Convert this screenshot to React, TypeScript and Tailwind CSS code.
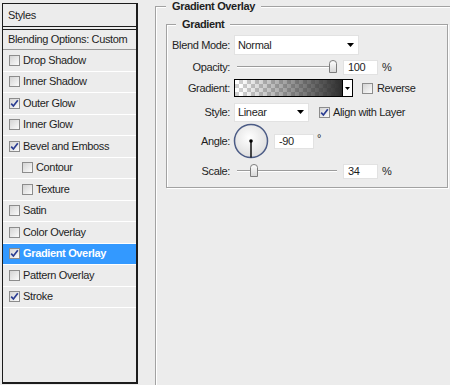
import React from "react";

type Item = { name: string; checked: boolean; indent?: boolean; active?: boolean };

const items: Item[] = [
    { name: "Drop Shadow", checked: false },
    { name: "Inner Shadow", checked: false },
    { name: "Outer Glow", checked: true },
    { name: "Inner Glow", checked: false },
    { name: "Bevel and Emboss", checked: true },
    { name: "Contour", checked: false, indent: true },
    { name: "Texture", checked: false, indent: true },
    { name: "Satin", checked: false },
    { name: "Color Overlay", checked: false },
    { name: "Gradient Overlay", checked: true, active: true },
    { name: "Pattern Overlay", checked: false },
    { name: "Stroke", checked: true },
];

const CheckBox = ({ checked }: { checked: boolean }) => (
    <span className="w-[11px] h-[11px] shrink-0 border border-[#8c8c8c] bg-linear-to-br from-[#d4d4d4] to-[#fbfbfb] flex items-center justify-center">
        {checked && (
            <svg width="9" height="9" viewBox="0 0 9 9">
                <path d="M1.2 4.6 L3.4 7 L7.8 1.3" fill="none" stroke="#2b3d92" strokeWidth="1.7" />
            </svg>
        )}
    </span>
);

const Arrow = () => (
    <svg width="7" height="4" viewBox="0 0 7 4">
        <path d="M0 0 H7 L3.5 4 Z" fill="#000" />
    </svg>
);

const Thumb = () => (
    <svg width="8" height="13" viewBox="0 0 8 13">
        <defs>
            <linearGradient id="thumbFill" x1="0" x2="0" y1="0" y2="1">
                <stop offset="0" stopColor="#ffffff" />
                <stop offset="1" stopColor="#d6d6d6" />
            </linearGradient>
        </defs>
        <path d="M0.5 3.5 Q0.5 0.5 4 0.5 Q7.5 0.5 7.5 3.5 V12.5 H0.5 Z" fill="url(#thumbFill)" stroke="#7c7c7c" />
    </svg>
);

// slider track with thumb at a fixed spot
const Slider = ({ thumbClass }: { thumbClass: string }) => (
    <div className="relative w-[100px] h-[14px] ml-[3px]">
        <div className="absolute left-0 right-0 top-[6px] h-[2px] border-t border-[#9c9c9c] border-b border-b-white" />
        <div className={`absolute top-0 ${thumbClass}`}>
            <Thumb />
        </div>
    </div>
);

const Row = ({ label, className, children }: { label: string; className: string; children: React.ReactNode }) => (
    <div className={`flex items-center ${className}`}>
        <span className="w-[63px] text-right shrink-0">{label}</span>
        <div className="ml-[4px] flex items-center">{children}</div>
    </div>
);

export default function App() {
    return (
        <div className="w-[450px] h-[385px] overflow-hidden bg-[#ececec] flex font-['Liberation_Sans',Arial,sans-serif] text-[11px] leading-[13px] tracking-[-0.35px] text-[#1e1e1e] whitespace-nowrap">
            {/* layer styles list */}
            <div className="ml-[2px] mt-[3px] w-[136px] h-[381px] shrink-0 flex flex-col border-t border-l border-r-2 border-b-2 border-[#1c1c1c]">
                <div className="h-[22px] px-[5px] flex items-center">Styles</div>
                <div className="h-[4px] border-y border-[#1c1c1c]" />
                <div className="h-[20px] px-[5px] flex items-center border-b border-[#9a9a9a]">Blending Options: Custom</div>
                {items.map((it) => (
                    <div
                        key={it.name}
                        className={`h-[21.5px] flex items-center gap-[3px] border-b border-white ${it.indent ? "pl-[19px]" : "pl-[6px]"} ${it.active ? "bg-[#3399ff] text-white font-bold" : ""}`}
                    >
                        <CheckBox checked={it.checked} />
                        <span>{it.name}</span>
                    </div>
                ))}
            </div>

            {/* settings */}
            <fieldset className="ml-[17px] w-[300px] h-[392px] shrink-0 min-w-0 border border-[#a2a2a2] shadow-[inset_1px_1px_0_#fff] pl-[10px] pt-[5px]">
                <legend className="px-[6px] font-bold bg-[#ececec]">Gradient Overlay</legend>
                <fieldset className="w-[282px] min-w-0 border border-[#a2a2a2] shadow-[inset_1px_1px_0_#fff,1px_1px_0_#fff] pt-[4px] pb-[7px]">
                    <legend className="ml-[9px] px-[6px] font-bold bg-[#ececec]">Gradient</legend>

                    <Row label="Blend Mode:" className="h-[20px]">
                        <div className="w-[125px] h-[20px] bg-white border border-[#e2e2e2] flex items-center justify-between pl-[3px] pr-[4px]">
                            <span>Normal</span>
                            <Arrow />
                        </div>
                    </Row>

                    <Row label="Opacity:" className="h-[20px] mt-[2px]">
                        <Slider thumbClass="left-[92px]" />
                        <div className="ml-[6px] w-[35px] h-[15px] bg-white border border-[#e2e2e2] flex items-center pl-[4px]">100</div>
                        <span className="ml-[4px]">%</span>
                    </Row>

                    <Row label="Gradient:" className="h-[20px] mt-[1px]">
                        <div className="w-[109px] h-[18px] border border-black bg-[repeating-conic-gradient(#cfcfcf_0_25%,#ffffff_0_50%)] bg-[length:8px_8px]">
                            <div className="w-full h-full bg-linear-to-r from-transparent from-[5%] to-[#2e2e2e]" />
                        </div>
                        <div className="w-[10px] h-[18px] border border-l-0 border-black bg-white flex items-center justify-center">
                            <svg width="5" height="3" viewBox="0 0 5 3">
                                <path d="M0 0 H5 L2.5 3 Z" fill="#000" />
                            </svg>
                        </div>
                        <span className="ml-[9px]">
                            <CheckBox checked={false} />
                        </span>
                        <span className="ml-[4px]">Reverse</span>
                    </Row>

                    <Row label="Style:" className="h-[20px] mt-[4px]">
                        <div className="w-[75px] h-[19px] bg-white border border-[#e2e2e2] flex items-center justify-between pl-[3px] pr-[4px]">
                            <span>Linear</span>
                            <Arrow />
                        </div>
                        <span className="ml-[10px]">
                            <CheckBox checked />
                        </span>
                        <span className="ml-[3px]">Align with Layer</span>
                    </Row>

                    <Row label="Angle:" className="h-[36px] mt-[1px]">
                        <svg width="36" height="36" viewBox="0 0 36 36" className="-ml-[1px]">
                            <defs>
                                <radialGradient id="dial" cx="0.45" cy="0.4" r="0.6">
                                    <stop offset="0" stopColor="#ffffff" />
                                    <stop offset="1" stopColor="#dedede" />
                                </radialGradient>
                            </defs>
                            <circle cx="18" cy="18" r="16.5" fill="url(#dial)" stroke="#4c5c86" strokeWidth="1.5" />
                            <line x1="18" y1="18" x2="18" y2="34.5" stroke="#000" strokeWidth="1.4" />
                            <circle cx="18" cy="18" r="1.8" fill="#000" />
                        </svg>
                        <div className="ml-[5px] w-[40px] h-[15px] bg-white border border-[#e2e2e2] flex items-center pl-[4px]">-90</div>
                        <span className="ml-[3px] -mt-[6px]">°</span>
                    </Row>

                    <Row label="Scale:" className="h-[18px] mt-[3px]">
                        <Slider thumbClass="left-[13px]" />
                        <div className="ml-[6px] w-[35px] h-[15px] bg-white border border-[#e2e2e2] flex items-center pl-[4px]">34</div>
                        <span className="ml-[4px]">%</span>
                    </Row>
                </fieldset>
            </fieldset>
        </div>
    );
}
